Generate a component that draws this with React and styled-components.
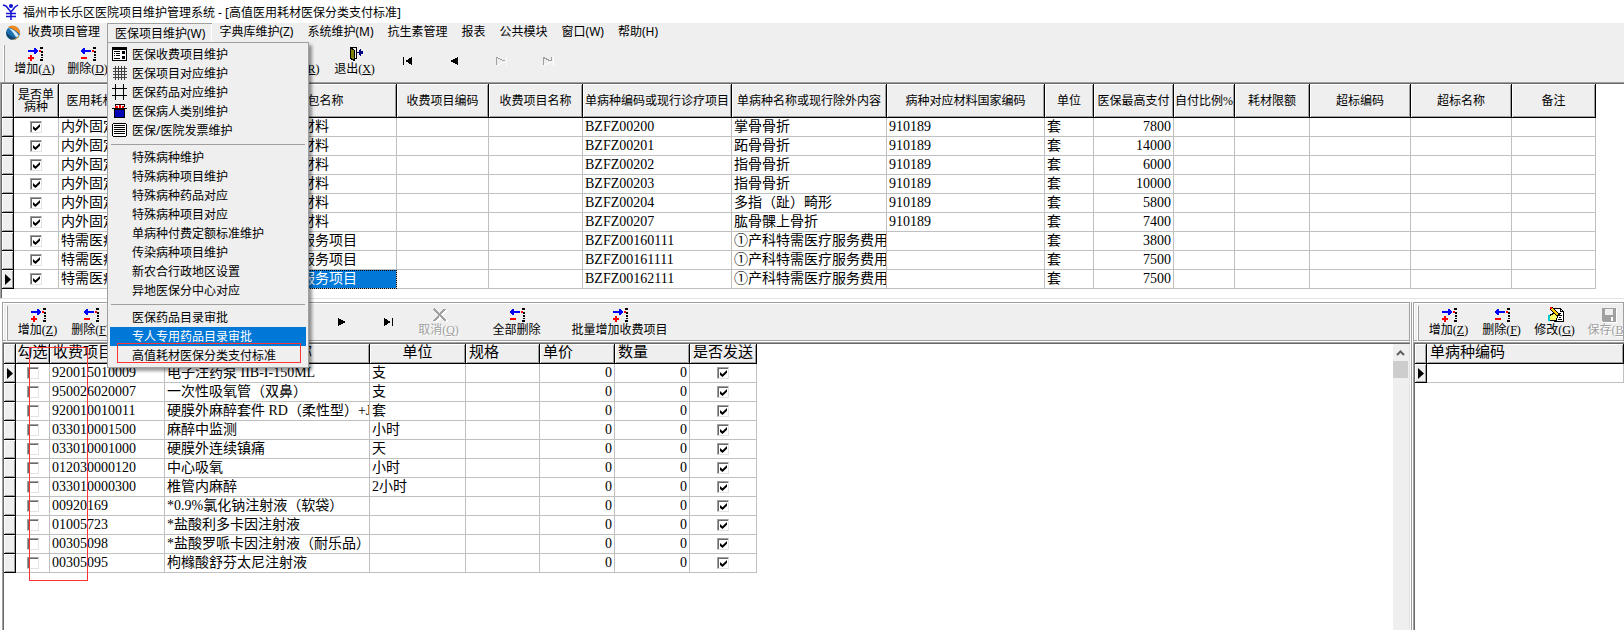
import React from "react"
import styled, { createGlobalStyle, css } from "styled-components"

const uiFont = '"Noto Sans", "Noto Sans CJK SC", sans-serif'
const gridFont = '"Liberation Serif", "Noto Sans CJK SC", serif'

const topColumns = [
  { title: "是否单病种", width: 45, check: true },
  { title: "医用耗材医保分类支付标准编码", width: 184 },
  { title: "分包名称", width: 154 },
  { title: "收费项目编码", width: 92 },
  { title: "收费项目名称", width: 94 },
  { title: "单病种编码或现行诊疗项目", width: 149 },
  { title: "单病种名称或现行除外内容", width: 155 },
  { title: "病种对应材料国家编码", width: 158 },
  { title: "单位", width: 49 },
  { title: "医保最高支付", width: 80, right: true },
  { title: "自付比例%", width: 61 },
  { title: "耗材限额", width: 75 },
  { title: "超标编码", width: 101 },
  { title: "超标名称", width: 101 },
  { title: "备注", width: 84 },
]

const bone = "内外固定材料"
const special = "特需医疗服务项目"
const maternity = "①产科特需医疗服务费用"

const topRows = [
  [bone, "BZFZ00200", "掌骨骨折", "910189", "7800"],
  [bone, "BZFZ00201", "跖骨骨折", "910189", "14000"],
  [bone, "BZFZ00202", "指骨骨折", "910189", "6000"],
  [bone, "BZFZ00203", "指骨骨折", "910189", "10000"],
  [bone, "BZFZ00204", "多指（趾）畸形", "910189", "5800"],
  [bone, "BZFZ00207", "肱骨髁上骨折", "910189", "7400"],
  [special, "BZFZ00160111", maternity, "", "3800"],
  [special, "BZFZ00161111", maternity, "", "7500"],
  [special, "BZFZ00162111", maternity, "", "7500"],
].map(([pack, code, name, national, pay]) => [
  true, pack, pack, "", "", code, name, national, "套", pay, "", "", "", "", "",
])

const itemColumns = [
  { title: "勾选", width: 34, check: true, center: true },
  { title: "收费项目编码", width: 115 },
  { title: "收费项目名称", width: 205, center: true },
  { title: "单位", width: 96, center: true },
  { title: "规格", width: 74 },
  { title: "单价", width: 75, right: true },
  { title: "数量", width: 75, right: true },
  { title: "是否发送", width: 67, check: true },
]

const itemRows = [
  ["920015010009", "电子注药泵 IIB-I-150ML", "支"],
  ["950026020007", "一次性吸氧管（双鼻）", "支"],
  ["920010010011", "硬膜外麻醉套件 RD（柔性型）+J", "套"],
  ["033010001500", "麻醉中监测", "小时"],
  ["033010001000", "硬膜外连续镇痛", "天"],
  ["012030000120", "中心吸氧", "小时"],
  ["033010000300", "椎管内麻醉", "2小时"],
  ["00920169", "*0.9%氯化钠注射液（软袋）", ""],
  ["01005723", "*盐酸利多卡因注射液", ""],
  ["00305098", "*盐酸罗哌卡因注射液（耐乐品）", ""],
  ["00305095", "枸橼酸舒芬太尼注射液", ""],
].map(([code, name, unit]) => [false, code, name, unit, "", "0", "0", true])

const diseaseColumns = [{ title: "单病种编码", width: 197 }]

const App = () => {
  return (
    <Window>
      <GlobalStyle />
      <TitleBar>
        <AppLogo />
        福州市长乐区医院项目维护管理系统 - [高值医用耗材医保分类支付标准]
      </TitleBar>

      <MenuBar>
        <MenuLogo><SphereLogo /></MenuLogo>
        <MenuEntry>收费项目管理</MenuEntry>
        <MenuHolder>
          <MenuEntry $open>医保项目维护(W)</MenuEntry>
          <InsuranceMenu />
        </MenuHolder>
        <MenuEntry>字典库维护(Z)</MenuEntry>
        <MenuEntry>系统维护(M)</MenuEntry>
        <MenuEntry>抗生素管理</MenuEntry>
        <MenuEntry>报表</MenuEntry>
        <MenuEntry>公共模块</MenuEntry>
        <MenuEntry>窗口(W)</MenuEntry>
        <MenuEntry>帮助(H)</MenuEntry>
      </MenuBar>

      <ToolBar>
        <Gripper />
        <Tool icon={<AddIcon />} text="增加" hotkey="A" />
        <Tool icon={<RemoveIcon />} text="删除" hotkey="D" />
        <ToolGap $width={159} />
        <Tool text="刷新" hotkey="R" />
        <ToolGap $width={2} />
        <Tool icon={<ExitIcon />} text="退出" hotkey="X" />
        <ToolGap $width={2} />
        <NavButton aria-label="首条"><NavIcon bar flip /></NavButton>
        <NavButton aria-label="上一条"><NavIcon flip /></NavButton>
        <NavButton aria-label="下一条" disabled><NavIcon off /></NavButton>
        <NavButton aria-label="末条" disabled><NavIcon bar off /></NavButton>
      </ToolBar>

      <TopPanel>
        <DataGrid columns={topColumns} rows={topRows} current={8} selected={2} tall />
      </TopPanel>

      <Bottom>
        <LeftSide>
          <ToolBar $etched>
            <Gripper />
            <Tool icon={<AddIcon />} text="增加" hotkey="Z" />
            <Tool icon={<RemoveIcon />} text="删除" hotkey="F" />
            <ToolGap $width={201} />
            <NavButton aria-label="下一条"><NavIcon /></NavButton>
            <NavButton aria-label="末条"><NavIcon bar /></NavButton>
            <Tool icon={<CancelIcon />} text="取消" hotkey="Q" disabled />
            <Tool icon={<RemoveIcon />} text="全部删除" wide />
            <Tool icon={<AddIcon />} text="批量增加收费项目" wide />
          </ToolBar>
          <GridPanel>
            <GridArea>
              <DataGrid columns={itemColumns} rows={itemRows} current={0} />
            </GridArea>
            <ScrollBar>
              <ScrollUp aria-label="向上滚动">
                <svg width="9" height="6" viewBox="0 0 9 6">
                  <path d="M1 5 L4.500 1.500 L8 5" fill="none" stroke="#606060" strokeWidth="2" />
                </svg>
              </ScrollUp>
              <ScrollThumb />
            </ScrollBar>
            <ColumnMark />
          </GridPanel>
        </LeftSide>
        <Splitter />
        <RightSide>
          <ToolBar $etched>
            <Gripper />
            <Tool icon={<AddIcon />} text="增加" hotkey="Z" />
            <Tool icon={<RemoveIcon />} text="删除" hotkey="F" />
            <Tool icon={<EditIcon />} text="修改" hotkey="G" />
            <Tool icon={<SaveIcon />} text="保存" hotkey="B" disabled />
          </ToolBar>
          <GridPanel>
            <GridArea>
              <DataGrid columns={diseaseColumns} rows={[[""]]} current={0} />
            </GridArea>
          </GridPanel>
        </RightSide>
      </Bottom>
    </Window>
  )
}

const InsuranceMenu = () => (
  <DropMenu>
    <MenuItem><MenuIcon><FormIcon /></MenuIcon>医保收费项目维护</MenuItem>
    <MenuItem><MenuIcon><GridIcon /></MenuIcon>医保项目对应维护</MenuItem>
    <MenuItem><MenuIcon><FrameIcon /></MenuIcon>医保药品对应维护</MenuItem>
    <MenuItem><MenuIcon><BucketIcon /></MenuIcon>医保病人类别维护</MenuItem>
    <MenuItem><MenuIcon><ListIcon /></MenuIcon>医保/医院发票维护</MenuItem>
    <MenuLine />
    <MenuItem><MenuIcon />特殊病种维护</MenuItem>
    <MenuItem><MenuIcon />特殊病种项目维护</MenuItem>
    <MenuItem><MenuIcon />特殊病种药品对应</MenuItem>
    <MenuItem><MenuIcon />特殊病种项目对应</MenuItem>
    <MenuItem><MenuIcon />单病种付费定额标准维护</MenuItem>
    <MenuItem><MenuIcon />传染病种项目维护</MenuItem>
    <MenuItem><MenuIcon />新农合行政地区设置</MenuItem>
    <MenuItem><MenuIcon />异地医保分中心对应</MenuItem>
    <MenuLine />
    <MenuItem><MenuIcon />医保药品目录审批</MenuItem>
    <MenuItem $active><MenuIcon />专人专用药品目录审批</MenuItem>
    <MenuItem><MenuIcon />高值耗材医保分类支付标准<ItemMark /></MenuItem>
  </DropMenu>
)

const Tool = ({ icon, text, hotkey, disabled, wide }) => (
  <ToolButton disabled={disabled} $wide={wide}>
    <ToolPicture>{icon}</ToolPicture>
    <span>{text}{hotkey && <>(<u>{hotkey}</u>)</>}</span>
  </ToolButton>
)

const DataGrid = ({ columns, rows, current, selected, tall }) => (
  <Table>
    <colgroup>
      <Col $width={12} />
      {columns.map(c => <Col key={c.title} $width={c.width} />)}
    </colgroup>
    <thead>
      <tr>
        <HeadCell $tall={tall} />
        {columns.map(c => (
          <HeadCell key={c.title} $tall={tall} $center={tall || c.center}>
            {c.title === "是否单病种" ? <>是否单<br />病种</> : c.title}
          </HeadCell>
        ))}
      </tr>
    </thead>
    <tbody>
      {rows.map((row, r) => (
        <tr key={r}>
          <MarkCell>
            {r === current && (
              <svg width="6" height="11" viewBox="0 0 6 11"><path d="M0 0 L6 5.500 L0 11 Z" /></svg>
            )}
          </MarkCell>
          {row.map((value, i) => (
            <Cell key={i} $right={columns[i].right} $selected={r === current && i === selected}>
              {columns[i].check
                ? <CheckBox type="checkbox" defaultChecked={value} aria-label={columns[i].title} />
                : value}
            </Cell>
          ))}
        </tr>
      ))}
    </tbody>
  </Table>
)


// icons

const Icon = ({ children, size = 16 }) => (
  <svg width={size} height={size} viewBox={`0 0 ${size} ${size}`} shapeRendering="crispEdges">{children}</svg>
)

const Dots = () => (
  <>
    <path d="M12 1h3v2h-3z M13 5h2v2h-2z M13 8h2v2h-2z M13 11h2v1h-2z M12 13h3v2h-3z" />
    <path fill="#f00" d="M11 4h2v2h-2z" />
  </>
)

const AddIcon = () => (
  <Icon>
    <path fill="#00f" d="M0 4h6V2h2v1h1v1h1v2H9v1H8v1H6V6H0z" />
    <path fill="#f00" d="M2 9h2v2h2v2H4v2H2v-2H0v-2h2z" />
    <Dots />
  </Icon>
)

const RemoveIcon = () => (
  <Icon>
    <path fill="#00f" d="M10 4H4V2H2v1H1v1H0v2h1v1h1v1h2V6h6z" />
    <path fill="#f00" d="M0 11h6v2H0z" />
    <Dots />
  </Icon>
)

const ExitIcon = () => (
  <Icon>
    <path fill="none" stroke="#000" d="M2.500 12.500V1.500H8.500V12.500H6" />
    <path fill="#808000" stroke="#000" d="M2.500 1.500L6.500 4.500V14.500L2.500 12.500Z" />
    <path fill="#000080" d="M9 6h2V4h1V3h1v2h2v3h-2v2h-1V9h-1V7H9z" />
  </Icon>
)

const CancelIcon = () => (
  <Icon>
    <path d="M3 2L15 14M14 2L3 14" stroke="#fff" strokeWidth="2" transform="translate(1 1)" />
    <path d="M2 2L14 14M13 2L2 14" stroke="#a0a0a0" strokeWidth="2" />
  </Icon>
)

const EditIcon = () => (
  <Icon>
    <path fill="#fff" stroke="#000" d="M5.500 1.500H12.500L15.500 4.500V14.500H6.500Z" />
    <path fill="none" stroke="#000" d="M12.500 1.500V4.500H15.500M10 6.500H13M10 8.500H14M11 10.500H13M10 12.500H14" />
    <path fill="#ff6" stroke="#000" d="M1.500 8.500L5.500 6.500L10.500 7.500L9.500 9.500L8.500 13.500H1.500Z" />
    <path stroke="#000" strokeWidth="3" d="M3 1L11 9" />
    <path stroke="#fc0" strokeWidth="2" d="M3 1L10 8" />
    <path fill="#f00" d="M2 0h2v2H2z" />
    <path fill="#0cc" d="M0 8h2v6H0z" />
  </Icon>
)

const SaveIcon = () => (
  <Icon>
    <path fill="#a0a0a0" d="M1 1h14v14H2l-1-1z" />
    <path fill="#efefef" d="M4 2h8v6H4z" />
    <path fill="#fff" d="M10 10h2v4h-2z M15 2h1v14H3v-1h12z" />
  </Icon>
)

const NavIcon = ({ bar, flip, off }) => (
  <svg width="12" height="10" viewBox="0 0 12 10" transform={flip ? "scale(-1 1)" : undefined} shapeRendering="crispEdges">
    {off
      ? <>
          <path d="M2 9.500L10 5.500M11.500 1V9.500" stroke="#fff" opacity={bar ? 1 : 0.8} />
          <path d={bar ? "M1.500 9V1.500L8.500 5M9.500 1V5" : "M1.500 9V1.500L9.500 5"} fill="none" stroke="#a0a0a0" />
        </>
      : <path d={bar ? "M1 1L8 5L1 9ZM9 1h1v8H9z" : "M2 1L10 5L2 9Z"} />}
  </svg>
)

const AppLogo = () => (
  <svg width="18" height="18" viewBox="0 0 18 18">
    <g fill="none" stroke="#1414d2" strokeWidth="1.500">
      <path d="M1 2L4 3L9 9L13 4L16 2M9 9V17M4 10.500H14M4 13.500H14" />
      <circle cx="9" cy="3" r="1.300" fill="#1414d2" />
    </g>
  </svg>
)

const SphereLogo = () => (
  <svg width="16" height="16" viewBox="0 0 16 16">
    <circle cx="8" cy="8" r="7" fill="#1c6fb0" />
    <path d="M3 2Q7-1 12 2Q16 6 15 10Q12 5 3 2Z" fill="#f28a1c" />
    <path d="M3 3Q10 4 14 11Q12 12 11 12Q6 4 3 3Z" fill="#d9edf8" />
    <path d="M1 6Q4 12 12 13Q9 16 5 14Q1 11 1 6Z" fill="#12456f" />
    <path d="M6 15Q12 14 14 10Q14 15 6 15Z" fill="#f6b04c" />
  </svg>
)

const FormIcon = () => (
  <Icon>
    <path d="M0 1h15v14H0z" />
    <path fill="#fff" d="M1 4h13v10H1z" />
    <path d="M2 5h6v1H2z M2 7h1v1H2z M4 7h4v1H4z M2 9h1v1H2z M4 9h4v1H4z M2 12h6v1H2z M10 5h3v3h-3z M10 10h3v3h-3z" />
  </Icon>
)

const GridIcon = () => (
  <Icon>
    <path stroke="#404040" d="M1 3.500H15M1 6.500H15M1 9.500H15M1 12.500H15M3.500 1V15M6.500 1V15M9.500 1V15M12.500 1V15" />
  </Icon>
)

const FrameIcon = () => (
  <Icon>
    <path stroke="#000" d="M0 4.500H15M0 11.500H15M3.500 0V16M11.500 0V16" />
  </Icon>
)

const BucketIcon = () => (
  <Icon>
    <path fill="none" stroke="#000" d="M3.500 4V1.500H12.500V4M0 5.500H15" />
    <path fill="#fff" d="M4 2h8v3H4z" />
    <path fill="#f00" d="M3 3h3v2H3z M7 2h2v3H7z M10 3h2v2h-2z" />
    <path fill="#0000b4" stroke="#000" d="M2.500 6.500H12.500V14.500H2.500Z" />
  </Icon>
)

const ListIcon = () => (
  <Icon>
    <path d="M1 1h13v1H1z M1 14h13v1H1z M0 2h1v12H0z M14 2h1v12h-1z" />
    <path fill="#fff" d="M1 2h13v12H1z" />
    <path d="M2 3h11v1H2z M2 5h11v1H2z M2 7h11v1H2z M2 9h11v1H2z M2 11h11v1H2z" />
  </Icon>
)


const GlobalStyle = createGlobalStyle`
* {
  box-sizing: border-box;
}
body {
  margin: 0;
  background: white;
  color: black;
  font-family: ${uiFont};
  font-size: 12px;
}
button {
  border: 0;
  margin: 0;
  padding: 0;
  background: none;
  color: inherit;
  font: inherit;
  white-space: nowrap;
}
svg {
  display: block;
}
`;

const Window = styled.div`
display: flex;
flex-direction: column;
min-height: 100vh;
overflow: hidden;
`;

const TitleBar = styled.header`
display: flex;
align-items: center;
gap: 3px;
height: 23px;
padding-left: 2px;
white-space: nowrap;
`;

const MenuBar = styled.nav`
display: flex;
height: 19px;
background: #efefef;
`;

const MenuLogo = styled.span`
display: flex;
align-items: center;
justify-content: center;
width: 21px;
padding-left: 4px;
`;

const MenuHolder = styled.div`
display: flex;
position: relative;
`;

const MenuEntry = styled.button`
padding: 0 7px 2px;
line-height: 17px;
${p => p.$open && css`
  padding-bottom: 0;
  border: solid #a0a0a0;
  border-width: 1px 0 0 1px;
  box-shadow: inset -1px 0 white;
`}
`;

const DropMenu = styled.div`
position: absolute;
top: 100%;
left: 0;
z-index: 2;
width: 202px;
padding: 2px;
border: 1px solid #a0a0a0;
background: #efefef;
box-shadow: 3px 3px 3px rgba(0, 0, 0, 0.4);
`;

const MenuItem = styled.button`
display: flex;
align-items: center;
position: relative;
width: 100%;
height: 19px;
padding-bottom: 2px;
color: ${p => p.$active ? "white" : "black"};
background: ${p => p.$active ? "#0078d7" : "transparent"};
`;

const MenuIcon = styled.span`
width: 22px;
padding-left: 2px;
`;

const MenuLine = styled.hr`
height: 1px;
margin: 4px 1px 3px;
border: 0;
background: #a0a0a0;
`;

const ItemMark = styled.i`
position: absolute;
top: -3px;
left: 7px;
width: 184px;
height: 20px;
border: 1px solid #f33;
pointer-events: none;
`;

const ToolBar = styled.div`
display: flex;
height: 40px;
padding: 3px 0 0 3px;
background: #efefef;
font-family: ${gridFont};
overflow: hidden;
${p => p.$etched && css`
  border: 1px solid #a0a0a0;
  border-bottom: 1px solid white;
  box-shadow: inset 0 -1px #a0a0a0, inset 1px 1px white;
`}
`;

const Gripper = styled.span`
flex: none;
width: 2px;
margin-right: 3px;
border-left: 1px solid white;
border-right: 1px solid #a0a0a0;
`;

const ToolButton = styled.button`
display: flex;
flex: none;
flex-direction: column;
align-items: center;
width: ${p => p.$wide ? 103 : 53}px;
padding-top: 1px;
line-height: 14px;
&:disabled {
  color: #a0a0a0;
  text-shadow: 1px 1px white;
}
`;

const ToolPicture = styled.span`
height: 16px;
padding-left: 2px;
`;

const ToolGap = styled.span`
flex: none;
width: ${p => p.$width}px;
`;

const NavButton = styled.button`
display: flex;
flex: none;
align-items: center;
justify-content: center;
width: 47px;
height: 31px;
`;

const panelEdge = css`
border: solid #a0a0a0;
border-width: 1px 0 0 1px;
box-shadow: inset 1px 1px #696969;
padding: 1px 0 0 1px;
`;

const TopPanel = styled.section`
${panelEdge}
padding-bottom: 9px;
border-bottom: 1px solid #e3e3e3;
margin-bottom: 3px;
`;

const Bottom = styled.div`
display: flex;
flex: 1;
`;

const LeftSide = styled.section`
display: flex;
flex: 1;
flex-direction: column;
min-width: 0;
margin-left: 2px;
`;

const RightSide = styled.section`
display: flex;
flex-direction: column;
width: 211px;
overflow: hidden;
`;

const Splitter = styled.div`
width: 3px;
border: solid white;
border-width: 0 1px;
background: #a0a0a0;
`;

const GridPanel = styled.div`
display: flex;
flex: 1;
position: relative;
${panelEdge}
`;

const GridArea = styled.div`
flex: 1;
min-width: 0;
overflow: hidden;
`;

const ColumnMark = styled.i`
position: absolute;
top: 4px;
left: 26px;
width: 59px;
height: 234px;
border: 1px solid #f33;
pointer-events: none;
`;

const ScrollBar = styled.div`
width: 17px;
padding-right: 1px;
border-right: 1px solid #e3e3e3;
background: #efefef;
`;

const ScrollUp = styled.button`
display: flex;
align-items: center;
justify-content: center;
width: 100%;
height: 17px;
`;

const ScrollThumb = styled.div`
height: 17px;
background: #cdcdcd;
`;

const Table = styled.table`
table-layout: fixed;
width: 1px;
border-spacing: 0;
font-family: ${gridFont};
font-size: 14px;
line-height: 18px;
white-space: nowrap;
`;

const Col = styled.col`
width: ${p => p.$width}px;
`;

const bevel = css`
border: solid black;
border-width: 0 1px 1px 0;
background: #efefef;
box-shadow: inset 1px 1px white, inset -1px -1px #a0a0a0;
`;

const HeadCell = styled.th`
${bevel}
height: ${p => p.$tall ? 34 : 20}px;
padding: 0 ${p => p.$center ? 0 : 3}px ${p => p.$tall ? 0 : 2}px;
overflow: hidden;
font-weight: normal;
font-size: ${p => p.$tall ? 12 : 15}px;
line-height: ${p => p.$tall ? 12 : 17}px;
text-align: ${p => p.$center ? "center" : "left"};
`;

const MarkCell = styled.th`
${bevel}
height: 19px;
padding: 0 0 0 3px;
`;

const Cell = styled.td`
height: 19px;
padding: 0 2px;
border: solid #c0c0c0;
border-width: 0 1px 1px 0;
overflow: hidden;
text-align: ${p => p.$right ? "right" : "left"};
${p => p.$selected && css`
  color: white;
  background: #0078d7;
  outline: 1px dotted #000;
  outline-offset: -1px;
`}
`;

const CheckBox = styled.input`
appearance: none;
display: block;
width: 12px;
height: 12px;
margin: 0 auto;
border: 1px solid;
border-color: #a0a0a0 #e3e3e3 #e3e3e3 #a0a0a0;
box-shadow: inset 1px 1px #696969;
&:checked::after {
  content: "";
  display: block;
  width: 7px;
  height: 7px;
  margin: 2px;
  background: black;
  clip-path: polygon(0 28%, 36% 62%, 100% 0, 100% 40%, 36% 100%, 0 70%);
}
`;


export default App;
